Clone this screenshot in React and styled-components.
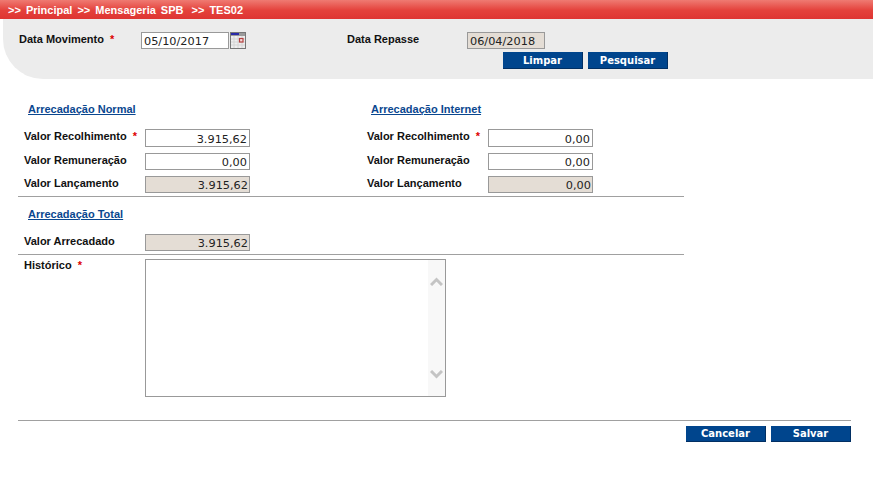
import React from 'react';
import styled, { createGlobalStyle } from 'styled-components';

const GlobalStyle = createGlobalStyle`
  html, body {
    margin: 0;
    padding: 0;
    background: #fff;
    font-family: "Liberation Sans", Arial, sans-serif;
  }
`;

const Page = styled.div`
  width: 873px;
  height: 482px;
  overflow: hidden;
`;

const Breadcrumb = styled.div`
  height: 19px;
  padding-left: 8px;
  display: flex;
  align-items: center;
  gap: 5px;
  background: linear-gradient(#ef7a72, #e4413b 55%, #de3532);
  color: #fff;
  font-size: 11px;
  font-weight: bold;
  word-spacing: 2px;
  white-space: pre;
`;

const LastCrumb = styled.span`
  padding-left: 3px;
`;

const Filter = styled.div`
  height: 60px;
  margin-left: 3px;
  padding: 13px 205px 0 16px;
  box-sizing: border-box;
  background: #ececec;
  border-bottom-left-radius: 40px;
`;

const FilterRow = styled.div`
  display: flex;
  align-items: flex-start;
`;

const FilterLabel = styled.label`
  width: ${({ $w }) => $w}px;
  padding-top: 1px;
  font-size: 11px;
  line-height: 13px;
  font-weight: bold;
  color: #111;
`;

const Required = styled.span`
  color: #d00;
  margin-left: 3px;
`;

const Input = styled.input`
  box-sizing: border-box;
  width: ${({ $w }) => $w || 105}px;
  height: ${({ $h }) => $h || 18}px;
  margin: 0;
  padding: 2px ${({ readOnly }) => (readOnly ? 1 : 2)}px 0 2px;
  border: 1px solid #999;
  border-radius: 0;
  outline: none;
  background: ${({ readOnly }) => (readOnly ? '#e4ddd5' : '#fff')};
  color: #222;
  font-family: "DejaVu Sans", Verdana, sans-serif;
  font-size: 11.3px;
  text-align: ${({ $left }) => ($left ? 'left' : 'right')};
`;

const CalendarIcon = styled.svg`
  width: 16px;
  height: 17px;
  margin-left: 1px;
  margin-right: 101px;
`;

const ButtonRow = styled.div`
  display: flex;
  justify-content: flex-end;
  gap: 5px;
  margin-top: 3px;
`;

const Button = styled.button`
  width: 80px;
  height: ${({ $h }) => $h || 17}px;
  padding: 0;
  border: 0;
  border-right: 1px solid #012f63;
  border-bottom: 1px solid #012f63;
  background: #00458d;
  color: #fff;
  font-family: "DejaVu Sans", Verdana, sans-serif;
  font-size: 10px;
  font-weight: bold;
`;

const Form = styled.div`
  padding: 23px 0 0 18px;
  width: 833px;
`;

const Columns = styled.div`
  display: grid;
  grid-template-columns: 343px 323px;
  width: 666px;
  padding-bottom: 3px;
  border-bottom: 1px solid #a0a0a0;
`;

const SectionLink = styled.a`
  display: block;
  width: max-content;
  margin-left: 10px;
  font-size: 11px;
  line-height: 14px;
  font-weight: bold;
  color: #0a478f;
  text-decoration: underline;
`;

const Rows = styled.div`
  display: flex;
  flex-direction: column;
  gap: 6px;
  padding: 13px 0 0 6px;
`;

const Row = styled.div`
  display: flex;
  align-items: flex-start;
`;

const RowLabel = styled.label`
  width: 121px;
  padding-top: 1px;
  font-size: 11px;
  line-height: 13px;
  font-weight: bold;
  color: #111;
`;

const TotalBlock = styled.div`
  width: 666px;
  padding: 10px 0 3px;
  border-bottom: 1px solid #a0a0a0;
`;

const TotalRow = styled(Row)`
  margin: 13px 0 0 6px;
`;

const HistoryRow = styled(Row)`
  margin: 4px 0 0 6px;
`;

const HistoryLabel = styled(RowLabel)`
  padding-top: 0;
`;

const TextBox = styled.div`
  box-sizing: border-box;
  width: 301px;
  height: 138px;
  border: 1px solid #999;
  display: flex;
  justify-content: flex-end;
`;

const ScrollTrack = styled.div`
  width: 17px;
  background: #f8f8f8;
  display: flex;
  flex-direction: column;
  justify-content: space-between;
  align-items: center;
  padding: 17px 0 17px;
`;

const Chevron = styled.svg`
  width: 13px;
  height: 9px;
`;

const Footer = styled.div`
  margin-top: 23px;
  border-top: 1px solid #a0a0a0;
  padding-top: 5px;
  display: flex;
  justify-content: flex-end;
  gap: 5px;
`;

const Calendar = () => (
  <CalendarIcon viewBox="0 0 16 17">
    <rect x="0.5" y="0.5" width="15" height="16" fill="#eeeeee" stroke="#777" />
    <rect x="1" y="1" width="14" height="3" fill="#9a9a9a" />
    <rect x="1" y="1" width="8" height="2" fill="#2a2aa8" />
    <path d="M1 7h14M1 10h14M1 13h14M4 4v12M8 4v12M12 4v12" stroke="#d4d4d4" strokeWidth="1" />
    <rect x="9.5" y="6.5" width="3.5" height="3.5" fill="#f4dcdc" stroke="#b5403f" strokeWidth="1.2" />
  </CalendarIcon>
);

const ValueRow = ({ label, value, required, locked, h }) => (
  <Row>
    <RowLabel>
      {label}
      {required && <Required> *</Required>}
    </RowLabel>
    <Input $h={h} defaultValue={value} readOnly={locked} />
  </Row>
);

const Arrecadacao = ({ title, recolhimento, remuneracao, lancamento }) => (
  <div>
    <SectionLink>{title}</SectionLink>
    <Rows>
      <ValueRow label="Valor Recolhimento" value={recolhimento} required />
      <ValueRow label="Valor Remuneração" value={remuneracao} h={17} />
      <ValueRow label="Valor Lançamento" value={lancamento} h={17} locked />
    </Rows>
  </div>
);

export default function App() {
  return (
    <Page>
      <GlobalStyle />
      <Breadcrumb>
        <span>{'>> Principal'}</span>
        <span>{'>> Mensageria SPB'}</span>
        <LastCrumb>{'>> TES02'}</LastCrumb>
      </Breadcrumb>
      <Filter>
        <FilterRow>
          <FilterLabel $w={122}>
            Data Movimento <Required> *</Required>
          </FilterLabel>
          <Input $w={88} $h={17} $left defaultValue="05/10/2017" />
          <Calendar />
          <FilterLabel $w={120}>Data Repasse</FilterLabel>
          <Input $w={78} $h={17} $left readOnly defaultValue="06/04/2018" />
        </FilterRow>
        <ButtonRow>
          <Button>Limpar</Button>
          <Button>Pesquisar</Button>
        </ButtonRow>
      </Filter>
      <Form>
        <Columns>
          <Arrecadacao title="Arrecadação Normal" recolhimento="3.915,62" remuneracao="0,00" lancamento="3.915,62" />
          <Arrecadacao title="Arrecadação Internet" recolhimento="0,00" remuneracao="0,00" lancamento="0,00" />
        </Columns>
        <TotalBlock>
          <SectionLink>Arrecadação Total</SectionLink>
          <TotalRow>
            <RowLabel>Valor Arrecadado</RowLabel>
            <Input $h={17} readOnly defaultValue="3.915,62" />
          </TotalRow>
        </TotalBlock>
        <HistoryRow>
          <HistoryLabel>
            Histórico <Required> *</Required>
          </HistoryLabel>
          <TextBox>
            <ScrollTrack>
              <Chevron viewBox="0 0 13 9">
                <path d="M1 8 L6.5 2.5 L12 8" fill="none" stroke="#c4c4c4" strokeWidth="3" />
              </Chevron>
              <Chevron viewBox="0 0 13 9">
                <path d="M1 1 L6.5 6.5 L12 1" fill="none" stroke="#c4c4c4" strokeWidth="3" />
              </Chevron>
            </ScrollTrack>
          </TextBox>
        </HistoryRow>
        <Footer>
          <Button $h={16}>Cancelar</Button>
          <Button $h={16}>Salvar</Button>
        </Footer>
      </Form>
    </Page>
  );
}
